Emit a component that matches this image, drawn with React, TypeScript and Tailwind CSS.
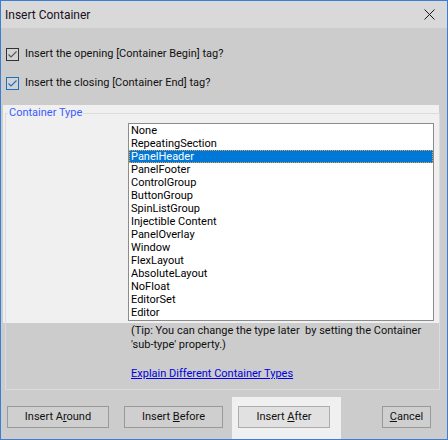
import React from "react";

const items = [
  "None",
  "RepeatingSection",
  "PanelHeader",
  "PanelFooter",
  "ControlGroup",
  "ButtonGroup",
  "SpinListGroup",
  "Injectible Content",
  "PanelOverlay",
  "Window",
  "FlexLayout",
  "AbsoluteLayout",
  "NoFloat",
  "EditorSet",
  "Editor",
];

function Check({ color, box }: { color: string; box: string }) {
  return (
    <svg width="13" height="13" viewBox="0 0 13 13" className="shrink-0">
      <rect x="0.5" y="0.5" width="12" height="12" fill="#d2d2d2" stroke={box} />
      <path d="M2.5 6.5 L5 9 L10.5 3.5" fill="none" stroke={color} strokeWidth="1.1" />
    </svg>
  );
}

export default function App() {
  return (
    <div
      className="w-[448px] h-[440px] border border-[#3b7fd4] bg-[#cccccc] flex flex-col text-[#111] text-[11px] leading-[14px]"
      style={{ fontFamily: "Roboto, 'Noto Sans', sans-serif" }}
    >
      {/* Title bar */}
      <div className="h-[27px] bg-[#d9d9d9] flex items-center justify-between pl-[4px] pr-[12px] shrink-0">
        <span className="text-[12px] text-[#1a1020]">Insert Container</span>
        <svg width="11" height="11" viewBox="0 0 11 11">
          <path d="M0.5 0.5 L10.5 10.5 M10.5 0.5 L0.5 10.5" stroke="#1a1a1a" strokeWidth="1" />
        </svg>
      </div>

      {/* Checkboxes */}
      <div className="pt-[18px] flex flex-col gap-[13px]">
        <div className="h-[16px] flex items-center pl-[5px] gap-[6px]">
          <Check color="#555555" box="#333333" />
          <span>Insert the opening [Container Begin] tag?</span>
        </div>
        <div className="h-[16px] flex items-center pl-[5px] gap-[6px]">
          <Check color="#1d6fc4" box="#1d6fc4" />
          <span>Insert the closing [Container End] tag?</span>
        </div>
      </div>

      {/* Group upper part (highlighted) */}
      <div className="mt-[14px] ml-[2px] w-[436px] h-[218px] bg-[#f0f0f0] pt-[1px] pl-[2px]">
        <fieldset className="border border-b-0 border-[#dcdcdc] w-[435px] h-[217px]">
          <legend className="ml-[2px] px-[1px] text-[#3b5bff] leading-[14px]">Container Type</legend>
          <div className="mt-[3px] ml-[122px] w-[306px] h-[198px] border border-[#8c8c8c] bg-white text-black">
            {items.map((it) =>
              it === "PanelHeader" ? (
                <div
                  key={it}
                  className="h-[13px] leading-[13px] pl-[2px] bg-[#0078d7] text-white outline-1 outline-dotted outline-[#f5a040] -outline-offset-1"
                >
                  {it}
                </div>
              ) : (
                <div key={it} className="h-[13px] leading-[13px] pl-[2px] whitespace-nowrap">
                  {it}
                </div>
              )
            )}
          </div>
        </fieldset>
      </div>

      {/* Group lower part */}
      <div className="ml-[4px] w-[435px] border border-t-0 border-[#dcdcdc] pt-[1px] pb-[8px] pl-[125px]">
        <p className="leading-[14px]">
          (Tip: You can change the type later&nbsp; by setting the Container
          <br />
          'sub-type' property.)
        </p>
        <a className="block mt-[15px] leading-[14px] text-[#0000e0] underline w-fit cursor-pointer">
          Explain Different Container Types
        </a>
      </div>

      {/* Buttons */}
      <div className="flex-1 flex items-stretch pt-[7px] pl-[6px]">
        <div className="pt-[9px]">
          <button className="w-[102px] h-[22px] border border-[#999999] bg-[#cfcfcf] text-[11px]">
            Insert A<span className="underline">r</span>ound
          </button>
        </div>
        <div className="pt-[9px] ml-[15px]">
          <button className="w-[99px] h-[22px] border border-[#999999] bg-[#cfcfcf] text-[11px]">
            Insert <span className="underline">B</span>efore
          </button>
        </div>
        <div className="ml-[9px] bg-[#f0f0f0] pt-[9px] pl-[6px] pr-[11px]">
          <button className="w-[92px] h-[22px] border border-[#adadad] bg-[#e1e1e1] text-[11px]">
            Insert <span className="underline">A</span>fter
          </button>
        </div>
        <div className="pt-[9px] ml-[41px]">
          <button className="w-[49px] h-[22px] border border-[#999999] bg-[#cfcfcf] text-[11px]">
            <span className="underline">C</span>ancel
          </button>
        </div>
      </div>
    </div>
  );
}
